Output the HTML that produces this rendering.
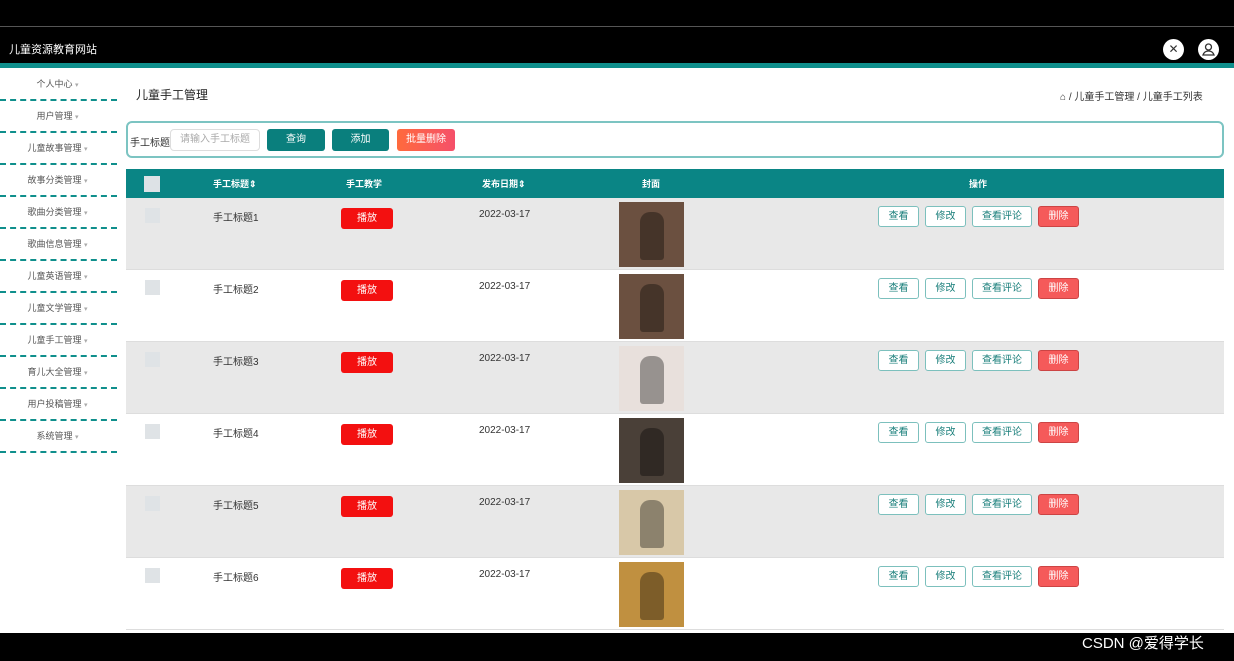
<!DOCTYPE html><html><head><meta charset="utf-8"><style>
*{margin:0;padding:0;box-sizing:border-box}
body{width:1234px;height:661px;overflow:hidden;background:#fff;font-family:"Liberation Sans","Noto Sans CJK SC",sans-serif;position:relative;font-size:10px;color:#333}
.abs{position:absolute}
.btn{position:absolute;height:21px;border-radius:3px;text-align:center;line-height:19px;font-size:10px}
.o{border:1.5px solid #7cc0bd;color:#1a7f7b;background:#fff}
.d{background:#f55a5a;color:#fff;border:1px solid #c44}
</style></head><body>
<div class="abs" style="left:0;top:0;width:1234px;height:63px;background:#000"></div>
<div class="abs" style="left:0;top:26px;width:1234px;height:1px;background:#555"></div>
<div class="abs" style="left:9px;top:41px;color:#fff;font-size:11px">儿童资源教育网站</div>
<div class="abs" style="left:1163px;top:39px;width:21px;height:21px;border-radius:50%;background:#fff;text-align:center;line-height:21px;font-size:12px;color:#333">✕</div>
<div class="abs" style="left:1198px;top:39px;width:21px;height:21px;border-radius:50%;background:#fff"><svg width="21" height="21"><circle cx="10.5" cy="8" r="3" fill="none" stroke="#333" stroke-width="1.3"/><path d="M5 16c1-3 3-4 5.5-4s4.5 1 5.5 4z" fill="none" stroke="#333" stroke-width="1.3"/></svg></div>
<div class="abs" style="left:0;top:63px;width:1234px;height:5px;background:#0f8f8c"></div>
<div id="side"></div>
<div class="abs" style="left:136px;top:86px;font-size:12px;color:#222">儿童手工管理</div>
<div class="abs" style="left:1060px;top:88px;font-size:10px;color:#333">⌂ / 儿童手工管理 / 儿童手工列表</div>
<div class="abs" style="left:126px;top:121px;width:1098px;height:37px;border:2px solid #7cc4c2;border-radius:6px"></div>
<div class="abs" style="left:130px;top:134px;font-size:10px">手工标题</div>
<div class="abs" style="left:170px;top:129px;width:90px;height:22px;border:1px solid #ddd;border-radius:4px;color:#aaa;line-height:20px;text-align:center">请输入手工标题</div>
<div class="btn" style="left:267px;top:129px;width:58px;height:22px;line-height:22px;background:#0a7f7d;color:#fff">查询</div>
<div class="btn" style="left:332px;top:129px;width:57px;height:22px;line-height:22px;background:#0a7f7d;color:#fff">添加</div>
<div class="btn" style="left:397px;top:129px;width:58px;height:22px;line-height:22px;background:linear-gradient(90deg,#ff6a3d,#f5506a);color:#fff">批量删除</div>
<div class="abs" style="left:126px;top:169px;width:1098px;height:29px;background:#0a8585;color:#fff;font-weight:bold;font-size:9px">
<div class="abs" style="left:18px;top:7px;width:16px;height:16px;background:#dde2e6"></div>
<div class="abs" style="left:87px;top:8px">手工标题⇕</div>
<div class="abs" style="left:220px;top:8px">手工教学</div>
<div class="abs" style="left:356px;top:8px">发布日期⇕</div>
<div class="abs" style="left:516px;top:8px">封面</div>
<div class="abs" style="left:843px;top:8px">操作</div>
</div>
<div id="rows"></div>
<div class="abs" style="left:0;top:633px;width:1234px;height:28px;background:#000"></div>
<div class="abs" style="left:1082px;top:632px;color:#fff;font-size:15px">CSDN @爱得学长</div>
<script>
var s='',m=['个人中心','用户管理','儿童故事管理','故事分类管理','歌曲分类管理','歌曲信息管理','儿童英语管理','儿童文学管理','儿童手工管理','育儿大全管理','用户投稿管理','系统管理'];
m.forEach(function(t,i){var y=77+i*32;s+='<div class="abs" style="left:0;top:'+y+'px;width:115px;text-align:center;font-size:9px;color:#555">'+t+' <span style="color:#aaa;font-size:7px">▾</span></div><div class="abs" style="left:0;top:'+(y+22)+'px;width:117px;border-top:2px dashed #0f8f8c"></div>';});
document.getElementById('side').innerHTML=s;
var cs=['#6b5040','#6b5040','#e8e0dc','#4a4038','#d8c8a8','#c09040'];
var r='';for(var i=0;i<6;i++){var y=198+i*72;
r+='<div class="abs" style="left:126px;top:'+y+'px;width:1098px;height:72px;background:'+(i%2?'#fff':'#e8e8e8')+';border-bottom:1px solid #ddd"></div>'+
'<div class="abs" style="left:145px;top:'+(y+10)+'px;width:15px;height:15px;background:#dfe3e6"></div>'+
'<div class="abs" style="left:213px;top:'+(y+11)+'px">手工标题'+(i+1)+'</div>'+
'<div class="btn" style="left:341px;top:'+(y+10)+'px;width:52px;height:21px;line-height:21px;background:#f31010;color:#fff">播放</div>'+
'<div class="abs" style="left:479px;top:'+(y+11)+'px">2022-03-17</div>'+
'<div class="abs" style="left:619px;top:'+(y+4)+'px;width:65px;height:65px;background:'+cs[i]+'"><div style="margin:10px auto;width:24px;height:48px;background:rgba(0,0,0,.35);border-radius:10px 10px 3px 3px"></div></div>'+
'<div class="btn o" style="left:878px;top:'+(y+8)+'px;width:41px">查看</div>'+
'<div class="btn o" style="left:925px;top:'+(y+8)+'px;width:41px">修改</div>'+
'<div class="btn o" style="left:972px;top:'+(y+8)+'px;width:60px">查看评论</div>'+
'<div class="btn d" style="left:1038px;top:'+(y+8)+'px;width:41px">删除</div>';}
document.getElementById('rows').innerHTML=r;
</script>
</body></html>
